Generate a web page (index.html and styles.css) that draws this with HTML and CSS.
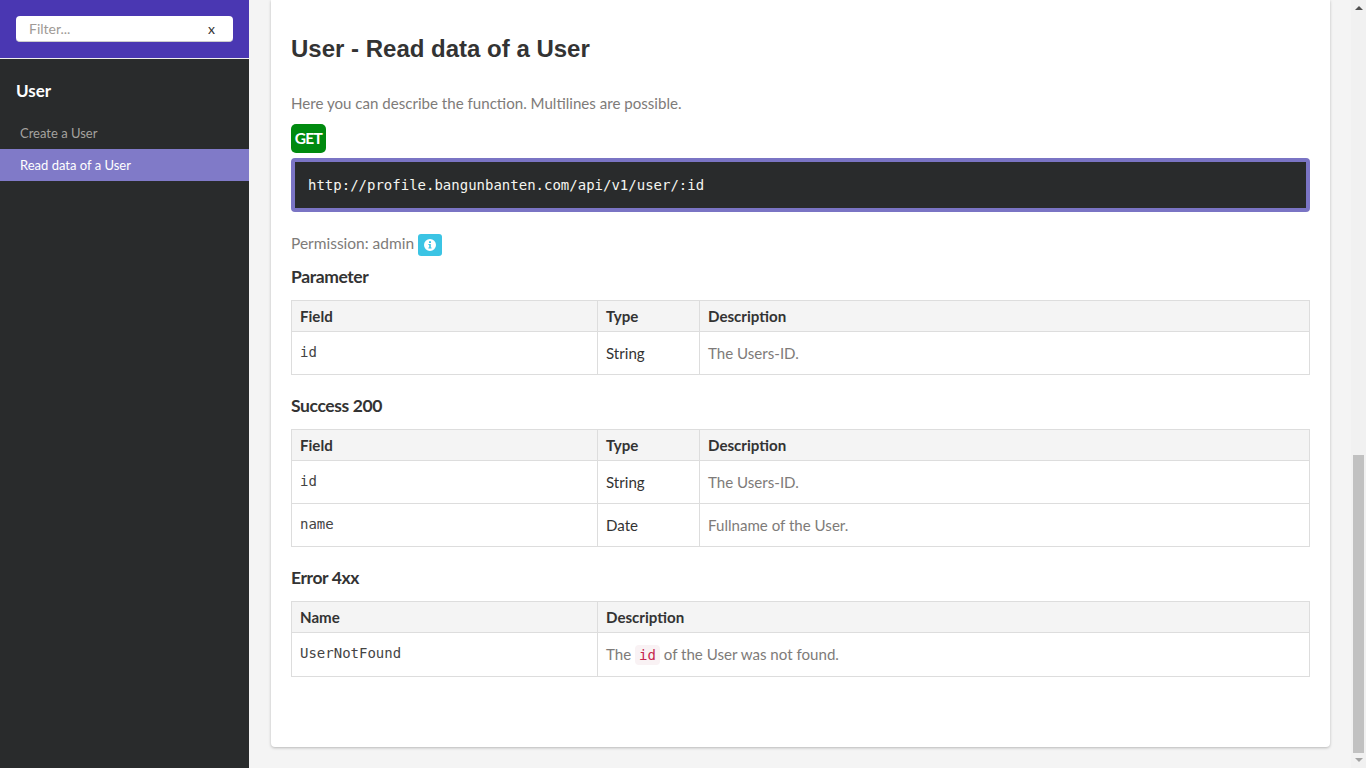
FILE: index.html
```html
<!DOCTYPE html>
<html lang="en">
<head>
    <meta charset="UTF-8">
    <title>apiDoc - User</title>
    <link rel="stylesheet" href="styles.css">
</head>
<body>
    <div class="sidebar">
        <div class="filter-box">
            <div class="filter-input">
                <span class="filter-placeholder">Filter...</span>
                <span class="filter-clear">x</span>
            </div>
        </div>
        <div class="nav-title">User</div>
        <a class="nav-item">Create a User</a>
        <a class="nav-item active">Read data of a User</a>
    </div>

    <div class="content">
        <div class="card">
            <h1>User - Read data of a User</h1>
            <p class="intro">Here you can describe the function. Multilines are possible.</p>
            <span class="method">GET</span>
            <pre class="url">http://profile.bangunbanten.com/api/v1/user/:id</pre>
            <p class="permission">
                Permission: admin
                <span class="info-btn">
                    <svg width="12" height="12" viewBox="0 0 12 12"><path fill="#fff" fill-rule="evenodd" d="M6 0a6 6 0 1 1 0 12A6 6 0 0 1 6 0zM5 2.2v1.9h2V2.2zM4.4 5v1.1h.8v2.3h-.8v1.2h3.2V8.4h-.8V5z"/></svg>
                </span>
            </p>

            <h2>Parameter</h2>
            <table>
                <tr><th class="col-field">Field</th><th class="col-type">Type</th><th>Description</th></tr>
                <tr><td class="mono">id</td><td class="dark">String</td><td>The Users-ID.</td></tr>
            </table>

            <h2>Success 200</h2>
            <table>
                <tr><th class="col-field">Field</th><th class="col-type">Type</th><th>Description</th></tr>
                <tr><td class="mono">id</td><td class="dark">String</td><td>The Users-ID.</td></tr>
                <tr><td class="mono">name</td><td class="dark">Date</td><td>Fullname of the User.</td></tr>
            </table>

            <h2>Error 4xx</h2>
            <table>
                <tr><th class="col-field">Name</th><th>Description</th></tr>
                <tr class="code-row"><td class="mono">UserNotFound</td><td>The <code>id</code> of the User was not found.</td></tr>
            </table>
        </div>
    </div>

    <div class="scrollbar">
        <div class="arrow-up"></div>
        <div class="thumb-space"><div class="thumb"></div></div>
        <div class="arrow-down"></div>
    </div>
</body>
</html>
```

FILE: styles.css
```css
html, body {
    height: 100%;
}

body {
    display: flex;
    margin: 0;
    overflow: hidden;
    background: #f4f4f4;
    color: #7e7b79;
    font-family: 'Lato', sans-serif;
    font-size: 15.1px;
}

/* sidebar */
.sidebar {
    flex: 0 0 249px;
    background: #292b2c;
}

.filter-box {
    height: 59px;
    padding: 16px;
    box-sizing: border-box;
    border-bottom: 1px solid #eee;
    background: #4a37b2;
}

.filter-input {
    display: flex;
    justify-content: space-between;
    align-items: center;
    height: 26px;
    padding: 0 18px 0 13px;
    background: #fff;
    border-radius: 4px;
    border-bottom: 1px solid #ccc;
    box-sizing: border-box;
    font-size: 14px;
}

.filter-placeholder {
    color: #a09a96;
}

.filter-clear {
    color: #333;
}

.nav-title {
    padding: 20px 16px 0;
    height: 58px;
    box-sizing: border-box;
    color: #fff;
    font-size: 17px;
    font-weight: 700;
    line-height: 24px;
}

.nav-item {
    display: block;
    height: 32px;
    padding-left: 20px;
    color: #a5a29f;
    font-size: 13px;
    line-height: 32px;
}

.nav-item.active {
    background: #807ac8;
    color: #fff;
}

/* main */
.content {
    flex: 1;
    min-width: 0;
    padding: 0 21px 0 22px;
}

.card {
    height: 747px;
    padding: 0 20px;
    box-sizing: border-box;
    background: #fff;
    border-radius: 0 0 4px 4px;
    box-shadow: 0 1px 3px rgba(0, 0, 0, 0.25);
    overflow: hidden;
}

h1 {
    margin: 34px 0 0;
    color: #333;
    font-family: 'Liberation Sans', sans-serif;
    font-size: 24px;
    font-weight: 700;
    line-height: 29px;
}

.intro {
    margin: 28px 0 9px;
    line-height: 24px;
}

.method {
    display: block;
    width: 35px;
    height: 29px;
    background: #008a0f;
    border-radius: 5px;
    color: #fff;
    font-size: 15.5px;
    font-weight: 700;
    letter-spacing: -0.6px;
    line-height: 29px;
    text-align: center;
}

.url {
    margin: 5px 0 0;
    padding: 13px;
    height: 54px;
    box-sizing: border-box;
    background: #292b2c;
    border: 4px solid #7a74c4;
    border-radius: 4px;
    color: #f5f5f0;
    font-family: 'DejaVu Sans Mono', monospace;
    font-size: 14px;
    line-height: 20px;
}

.permission {
    display: flex;
    align-items: flex-start;
    gap: 4px;
    margin: 22px 0 0;
    height: 22px;
    font-size: 15.5px;
    line-height: 18px;
}

.info-btn {
    display: flex;
    align-items: center;
    justify-content: center;
    width: 24px;
    height: 22px;
    background: #3bc4e4;
    border-radius: 3px;
}

h2 {
    margin: 9px 0 11px;
    color: #333;
    font-size: 17.5px;
    font-weight: 700;
    line-height: 24px;
    letter-spacing: -0.4px;
}

table {
    width: 100%;
    margin-bottom: 19px;
    border-collapse: collapse;
    table-layout: fixed;
}

th, td {
    padding: 0 8px;
    box-sizing: border-box;
    border: 1px solid #ddd;
    text-align: left;
}

th {
    height: 31px;
    background: #f4f4f4;
    color: #333;
    font-weight: 700;
}

td {
    height: 43px;
}

.code-row td {
    height: 44px;
    padding-bottom: 2px;
}

.code-row td.mono {
    padding-bottom: 4px;
}

.col-field {
    width: 306px;
}

.col-type {
    width: 102px;
}

.mono {
    padding-bottom: 2px;
    color: #444;
    font-family: 'DejaVu Sans Mono', monospace;
    font-size: 14px;
}

.dark {
    color: #333;
}

code {
    padding: 2px 4px;
    background: #f9f2f4;
    border-radius: 4px;
    color: #c7254e;
    font-family: 'DejaVu Sans Mono', monospace;
    font-size: 14px;
}

/* page scrollbar */
.scrollbar {
    display: flex;
    flex: 0 0 15px;
    flex-direction: column;
    align-items: center;
    background: #f1f1f1;
}

.arrow-up, .arrow-down {
    flex: none;
    width: 0;
    height: 0;
    margin: 6px 0;
    border-left: 4px solid transparent;
    border-right: 4px solid transparent;
}

.arrow-up {
    border-bottom: 4px solid #505050;
}

.arrow-down {
    margin-top: 5px;
    border-top: 4px solid #a3a3a3;
}

.thumb-space {
    display: flex;
    flex: 1;
    align-items: flex-end;
}

.thumb {
    width: 11px;
    height: 298px;
    background: #c1c1c1;
}
```
